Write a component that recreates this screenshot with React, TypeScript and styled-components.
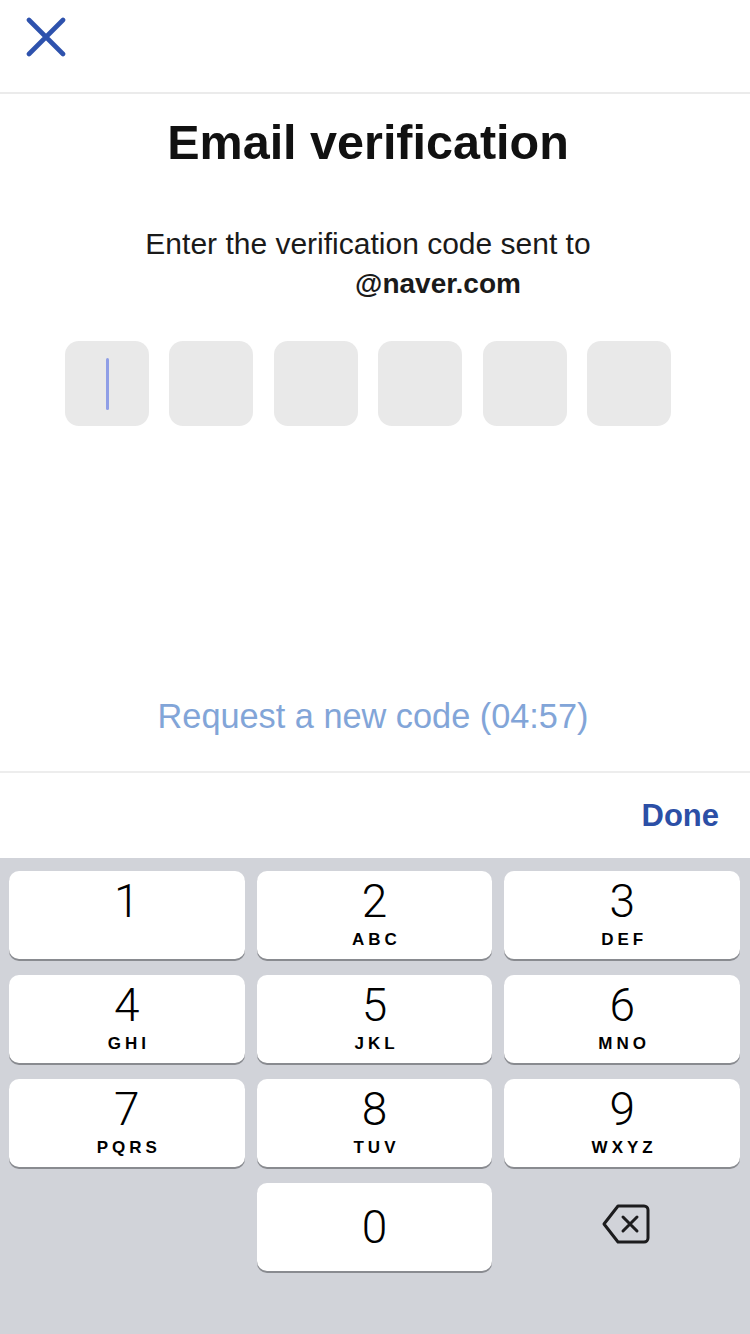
import React from "react";
import styled, { createGlobalStyle } from "styled-components";

const GlobalStyle = createGlobalStyle`
  html, body { margin: 0; padding: 0; background: #ffffff; }
  body { font-family: "Liberation Sans", Arial, sans-serif; -webkit-font-smoothing: antialiased; }
  * { box-sizing: border-box; }
`;

const Screen = styled.div`
  width: 750px;
  height: 1334px;
  display: flex;
  flex-direction: column;
  background: #ffffff;
  overflow: hidden;
`;

const Header = styled.header`
  height: 94px;
  flex: none;
  border-bottom: 2px solid #ebebeb;
  padding: 17px 0 0 26px;
`;

const CloseButton = styled.button`
  width: 40px;
  height: 40px;
  padding: 0;
  border: none;
  background: transparent;
  display: block;
  cursor: pointer;
`;

const Main = styled.main`
  flex: 1;
  display: flex;
  flex-direction: column;
  align-items: center;
  padding-right: 14px;
`;

const Title = styled.h1`
  margin: 25px 0 0;
  font-size: 48.5px;
  line-height: 47px;
  font-weight: 700;
  color: #111111;
  letter-spacing: 0;
`;

const Subtitle = styled.p`
  margin: 58px 0 0;
  font-size: 30px;
  line-height: 40px;
  color: #1a1a1a;
  text-align: center;
`;

const Email = styled.span`
  display: block;
  font-weight: 700;
  font-size: 28px;
  padding-left: 140px;
`;

const CodeRow = styled.div`
  margin-top: 37px;
  display: grid;
  grid-template-columns: repeat(6, 84px);
  column-gap: 20.4px;
`;

const CodeBox = styled.div`
  height: 85px;
  border-radius: 14px;
  background: #e9e9e9;
  display: flex;
  align-items: center;
  justify-content: center;
`;

const Cursor = styled.div`
  width: 3px;
  height: 52px;
  border-radius: 2px;
  background: #8f9ee6;
`;

const RequestLink = styled.button`
  margin: auto 0 38px 10px;
  border: none;
  background: transparent;
  padding: 0;
  font-family: "Liberation Sans", Arial, sans-serif;
  font-size: 34.3px;
  line-height: 34px;
  color: #82a5d8;
  cursor: pointer;
`;

const AccessoryBar = styled.div`
  height: 87px;
  flex: none;
  border-top: 2px solid #ededed;
  display: flex;
  align-items: center;
  justify-content: flex-end;
  padding: 0 31px 0 0;
`;

const DoneButton = styled.button`
  border: none;
  background: transparent;
  padding: 0;
  font-family: "Liberation Sans", Arial, sans-serif;
  font-size: 31px;
  font-weight: 700;
  color: #2c4fa6;
  cursor: pointer;
`;

const Keyboard = styled.div`
  height: 476px;
  flex: none;
  background: #d1d3d9;
  padding: 13px 10px 0 9px;
  display: grid;
  grid-template-columns: repeat(3, 1fr);
  grid-auto-rows: 88px;
  column-gap: 12px;
  row-gap: 16px;
`;

const Key = styled.button<{ $centered?: boolean }>`
  border: none;
  border-radius: 10px;
  background: #ffffff;
  box-shadow: 0 2px 0 #898b90;
  display: flex;
  flex-direction: column;
  align-items: center;
  justify-content: ${(p) => (p.$centered ? "center" : "flex-start")};
  padding: ${(p) => (p.$centered ? "0" : "7px 0 0")};
  cursor: pointer;
  color: #000000;
`;

const Digit = styled.span`
  font-family: Roboto, "Liberation Sans", sans-serif;
  font-weight: 300;
  font-size: 46px;
  line-height: 46px;
`;

const Letters = styled.span`
  margin-top: 7px;
  font-family: "Liberation Sans", Arial, sans-serif;
  font-weight: 700;
  font-size: 17px;
  line-height: 18px;
  letter-spacing: 4px;
  padding-left: 4px;
`;

const Blank = styled.div``;

const DeleteKey = styled.button`
  border: none;
  background: transparent;
  display: flex;
  align-items: center;
  justify-content: center;
  padding: 0 0 6px 8px;
  cursor: pointer;
`;

const keys: { d: string; l?: string }[] = [
  { d: "1" },
  { d: "2", l: "ABC" },
  { d: "3", l: "DEF" },
  { d: "4", l: "GHI" },
  { d: "5", l: "JKL" },
  { d: "6", l: "MNO" },
  { d: "7", l: "PQRS" },
  { d: "8", l: "TUV" },
  { d: "9", l: "WXYZ" },
];

export default function App() {
  return (
    <>
      <GlobalStyle />
      <Screen>
        <Header>
          <CloseButton aria-label="Close">
            <svg width="40" height="40" viewBox="0 0 40 40">
              <path
                d="M3 3 L37 37 M37 3 L3 37"
                stroke="#2e52ad"
                strokeWidth="4.6"
                strokeLinecap="round"
                fill="none"
              />
            </svg>
          </CloseButton>
        </Header>
        <Main>
          <Title>Email verification</Title>
          <Subtitle>
            Enter the verification code sent to
            <Email>@naver.com</Email>
          </Subtitle>
          <CodeRow>
            {Array.from({ length: 6 }).map((_, i) => (
              <CodeBox key={i}>{i === 0 && <Cursor />}</CodeBox>
            ))}
          </CodeRow>
          <RequestLink>Request a new code (04:57)</RequestLink>
        </Main>
        <AccessoryBar>
          <DoneButton>Done</DoneButton>
        </AccessoryBar>
        <Keyboard>
          {keys.map((k) => (
            <Key key={k.d}>
              <Digit>{k.d}</Digit>
              {k.l && <Letters>{k.l}</Letters>}
            </Key>
          ))}
          <Blank />
          <Key $centered>
            <Digit>0</Digit>
          </Key>
          <DeleteKey aria-label="Delete">
            <svg width="50" height="42" viewBox="0 0 50 42">
              <path
                d="M17 3 H43 A4 4 0 0 1 47 7 V35 A4 4 0 0 1 43 39 H17 L3 21 Z"
                stroke="#1c1c1e"
                strokeWidth="3"
                strokeLinejoin="round"
                fill="none"
              />
              <path
                d="M22 14 L36 28 M36 14 L22 28"
                stroke="#1c1c1e"
                strokeWidth="3"
                strokeLinecap="round"
                fill="none"
              />
            </svg>
          </DeleteKey>
        </Keyboard>
      </Screen>
    </>
  );
}
